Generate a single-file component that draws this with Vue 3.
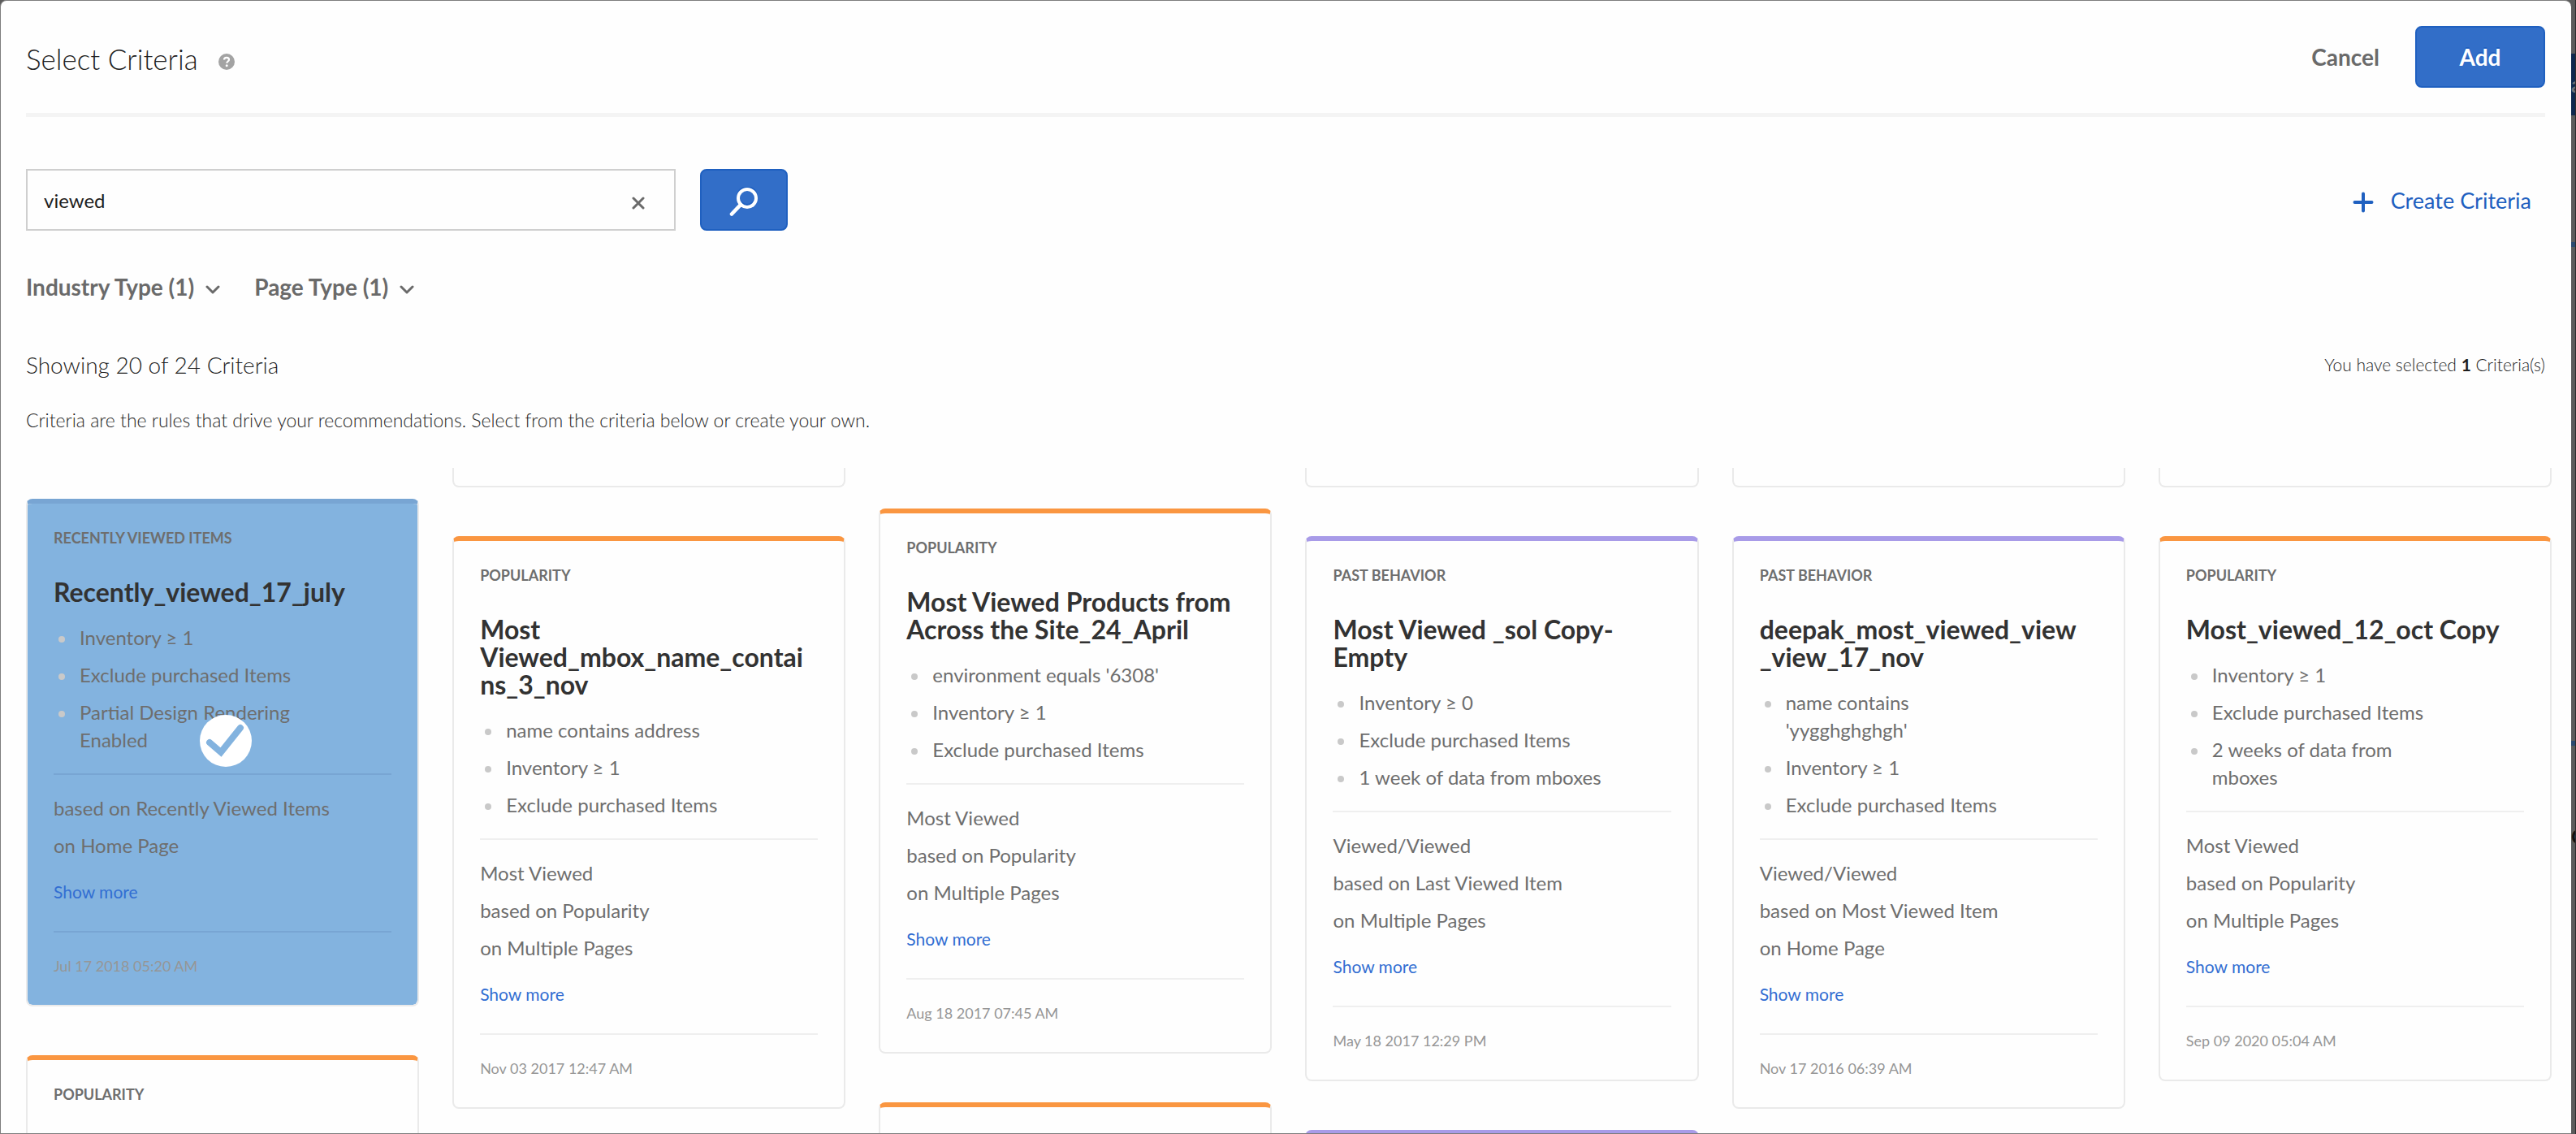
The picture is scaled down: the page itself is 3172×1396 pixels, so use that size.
<script setup>
import { ref } from 'vue'

const query = ref('viewed')

const columns = [
  {
    start: 'start-near',
    cards: [
      {
        category: 'Recently viewed items', tone: 'blue', selected: true,
        title: 'Recently_viewed_17_july',
        rules: ['Inventory ≥ 1', 'Exclude purchased Items', 'Partial Design Rendering Enabled'],
        basis: ['based on Recently Viewed Items', 'on Home Page'],
        date: 'Jul 17 2018 05:20 AM'
      },
      { category: 'Popularity', tone: 'orange' }
    ]
  },
  {
    start: 'stub',
    cards: [
      {
        category: 'Popularity', tone: 'orange',
        title: 'Most Viewed_mbox_name_contains_3_nov',
        rules: ['name contains address', 'Inventory ≥ 1', 'Exclude purchased Items'],
        basis: ['Most Viewed', 'based on Popularity', 'on Multiple Pages'],
        date: 'Nov 03 2017 12:47 AM'
      }
    ]
  },
  {
    start: 'start-far',
    cards: [
      {
        category: 'Popularity', tone: 'orange',
        title: 'Most Viewed Products from Across the Site_24_April',
        rules: ["environment equals '6308'", 'Inventory ≥ 1', 'Exclude purchased Items'],
        basis: ['Most Viewed', 'based on Popularity', 'on Multiple Pages'],
        date: 'Aug 18 2017 07:45 AM'
      },
      { category: '', tone: 'orange' }
    ]
  },
  {
    start: 'stub',
    cards: [
      {
        category: 'Past behavior', tone: 'purple',
        title: 'Most Viewed _sol Copy-Empty',
        rules: ['Inventory ≥ 0', 'Exclude purchased Items', '1 week of data from mboxes'],
        basis: ['Viewed/Viewed', 'based on Last Viewed Item', 'on Multiple Pages'],
        date: 'May 18 2017 12:29 PM'
      },
      { category: '', tone: 'purple' }
    ]
  },
  {
    start: 'stub',
    cards: [
      {
        category: 'Past behavior', tone: 'purple',
        title: 'deepak_most_viewed_view_view_17_nov',
        rules: ["name contains 'yygghghghgh'", 'Inventory ≥ 1', 'Exclude purchased Items'],
        basis: ['Viewed/Viewed', 'based on Most Viewed Item', 'on Home Page'],
        date: 'Nov 17 2016 06:39 AM'
      }
    ]
  },
  {
    start: 'stub',
    cards: [
      {
        category: 'Popularity', tone: 'orange',
        title: 'Most_viewed_12_oct Copy',
        rules: ['Inventory ≥ 1', 'Exclude purchased Items', '2 weeks of data from mboxes'],
        basis: ['Most Viewed', 'based on Popularity', 'on Multiple Pages'],
        date: 'Sep 09 2020 05:04 AM'
      }
    ]
  }
]
</script>

<template>
  <div class="screen">
    <main class="modal">
      <header class="head">
        <div class="heading">
          <h1>Select Criteria</h1>
          <button class="plain help" type="button" aria-label="Help">
            <svg width="20" height="20" viewBox="0 0 20 20">
              <circle cx="10" cy="10" r="10" fill="#a3a3a3" />
              <path d="M7 7.6C7 5.8 8.2 4.8 10 4.8s3 1 3 2.6c0 2-2.7 2.2-2.7 4.4" fill="none" stroke="#fff" stroke-width="2.2" />
              <circle cx="10.2" cy="14.8" r="1.5" fill="#fff" />
            </svg>
          </button>
        </div>
        <div class="actions">
          <button class="plain cancel" type="button">Cancel</button>
          <button class="primary add" type="button">Add</button>
        </div>
      </header>

      <div class="tools">
        <form class="search" role="search" @submit.prevent>
          <div class="field">
            <input v-model="query" type="text" aria-label="Search criteria">
            <button class="plain clear" type="button" aria-label="Clear search" @click="query = ''">
              <svg width="16" height="16" viewBox="0 0 16 16" fill="none" stroke="#6a6a6a" stroke-width="3" stroke-linecap="round">
                <path d="M2 2l12 12M14 2L2 14" />
              </svg>
            </button>
          </div>
          <button class="primary go" type="submit" aria-label="Search">
            <svg width="36" height="38" viewBox="0 0 36 38" fill="none" stroke-width="4" stroke-linecap="round">
              <circle cx="22" cy="12" r="11" stroke="#1f60c0" />
              <circle cx="22" cy="14" r="11" stroke="#fff" />
              <path d="M14 22L3 33.500" stroke="#fff" stroke-width="4.600" />
            </svg>
          </button>
        </form>
        <a class="create" href="#">
          <svg width="26" height="26" viewBox="0 0 26 26" stroke="#1f60c0" stroke-width="4" stroke-linecap="round">
            <path d="M13 2.500v21M2.500 13h21" />
          </svg>
          <span>Create Criteria</span>
        </a>
      </div>

      <div class="filters">
        <button v-for="name in ['Industry Type (1)', 'Page Type (1)']" :key="name" class="plain filter" type="button">
          {{ name }}
          <svg width="18" height="12" viewBox="0 0 18 12" fill="none" stroke="#6a6a6a" stroke-width="3" stroke-linecap="round" stroke-linejoin="round">
            <path d="M2 2l7 7 7-7" />
          </svg>
        </button>
      </div>

      <div class="summary">
        <h2>Showing 20 of 24 Criteria</h2>
        <p>You have selected <strong>1</strong> Criteria(s)</p>
      </div>
      <p class="intro">Criteria are the rules that drive your recommendations. Select from the criteria below or create your own.</p>

      <section class="board" aria-label="Criteria">
        <div v-for="(column, i) in columns" :key="i" class="column" :class="column.start">
          <div v-if="column.start === 'stub'" class="tail"></div>
          <article
            v-for="(card, j) in column.cards"
            :key="j"
            class="card"
            :class="[card.tone, { selected: card.selected, partial: !card.title }]"
          >
            <p class="category">{{ card.category }}</p>
            <template v-if="card.title">
              <h3>{{ card.title }}</h3>
              <ul>
                <li v-for="rule in card.rules" :key="rule">{{ rule }}</li>
              </ul>
              <div class="basis">
                <p v-for="line in card.basis" :key="line">{{ line }}</p>
                <a href="#">Show more</a>
              </div>
              <time>{{ card.date }}</time>
            </template>
            <svg v-if="card.selected" class="badge" width="64" height="64" viewBox="0 0 64 64">
              <circle cx="32" cy="32" r="32" fill="#fff" />
              <path d="M12 34l14 12 24-30" fill="none" stroke="#83b3df" stroke-width="8" stroke-linecap="round" stroke-linejoin="miter" />
            </svg>
          </article>
        </div>
      </section>
    </main>

    <aside class="behind" aria-hidden="true">
      <span class="navy">a</span>
      <span class="bar first"></span>
      <span class="bar second"></span>
      <span class="letter">C</span>
    </aside>
  </div>
</template>

<style>
body {
  margin: 0;
}
</style>

<style scoped>
.screen {
  display: grid;
  grid-template-columns: minmax(0, 1fr) 6px;
  height: 100vh;
  overflow: hidden;
  background: #5b5b5b;
  font-family: Lato, "Liberation Sans", sans-serif;
  color: #1e1e1e;
}

h1, h2, h3, p, ul {
  margin: 0;
  padding: 0;
  font-weight: 400;
}

button, input {
  font: inherit;
  color: inherit;
}

a {
  text-decoration: none;
}

.modal {
  display: flex;
  flex-direction: column;
  box-sizing: border-box;
  min-height: 0;
  padding: 0 32px 0 31px;
  border: solid #7d7d7d;
  border-width: 1px 0 1px 1px;
  border-radius: 8px 8px 0 0;
  background: #fefefe;
}

.plain {
  padding: 0;
  border: 0;
  background: none;
}

.primary {
  box-sizing: border-box;
  height: 76px;
  border: 2px solid #1f60c0;
  border-radius: 8px;
  background: #326ec8;
  color: #fff;
}

.head {
  display: flex;
  align-items: center;
  justify-content: space-between;
  padding: 31px 0;
  border-bottom: 5px solid #f4f4f4;
}

.heading {
  display: flex;
  align-items: center;
  gap: 25px;
  padding-top: 4px;
}

h1 {
  font-size: 35px;
  line-height: 42px;
  font-weight: 300;
}

.help {
  display: flex;
  padding-top: 8px;
}

.actions {
  display: flex;
  align-items: center;
  gap: 44px;
  font-size: 28px;
  font-weight: 700;
}

.cancel {
  color: #6a6a6a;
}

.add {
  width: 160px;
  text-shadow: 0 -2px #1f60c0;
}

.tools {
  display: flex;
  align-items: center;
  justify-content: space-between;
  margin-top: 64px;
}

.search {
  display: flex;
  gap: 30px;
}

.field {
  display: flex;
  align-items: center;
  box-sizing: border-box;
  width: 800px;
  height: 76px;
  border: 2px solid #cfcfcf;
}

.field input {
  flex: 1;
  min-width: 0;
  padding: 0 20px;
  border: 0;
  outline: 0;
  background: none;
  font-size: 24px;
}

.clear {
  display: flex;
  padding: 8px 36px 0 0;
}

.go {
  display: flex;
  align-items: center;
  justify-content: center;
  width: 108px;
  padding: 6px 0 0;
}

.create {
  display: flex;
  align-items: center;
  gap: 21px;
  padding-right: 17px;
  font-size: 27px;
  color: #1f60c0;
}

.create svg {
  padding-top: 6px;
}

.filters {
  display: flex;
  gap: 42px;
  margin-top: 52px;
}

.filter {
  display: flex;
  align-items: center;
  gap: 14px;
  font-size: 28px;
  line-height: 34px;
  font-weight: 700;
  color: #6a6a6a;
}

.filter svg {
  padding-top: 8px;
}

.summary {
  display: flex;
  justify-content: space-between;
  margin-top: 62px;
  line-height: 34px;
}

h2 {
  font-size: 28px;
  font-weight: 300;
}

.summary p {
  font-size: 21px;
  font-weight: 300;
}

.summary strong {
  font-weight: 700;
}

.intro {
  margin-top: 34px;
  font-size: 23px;
  line-height: 34px;
  font-weight: 300;
}

.board {
  flex: 1;
  display: grid;
  grid-template-columns: repeat(6, minmax(0, 1fr));
  gap: 41px;
  min-height: 0;
  margin: 42px -8px 0 0;
  overflow: hidden;
}

.column {
  display: flex;
  flex-direction: column;
  gap: 60px;
}

.start-near {
  padding-top: 38px;
}

.start-far {
  padding-top: 50px;
}

.tail {
  flex: none;
  box-sizing: border-box;
  height: 24px;
  border: 2px solid #eaeaea;
  border-top: 0;
  border-radius: 0 0 8px 8px;
}

.card {
  flex: none;
  position: relative;
  display: flex;
  flex-direction: column;
  padding: 32px 32px 36px;
  border: 2px solid #eaeaea;
  border-top-width: 6px;
  border-radius: 8px;
  color: #6e6e6e;
}

.orange {
  border-top-color: #fa9641;
}

.purple {
  border-top-color: #a89be8;
}

.selected {
  border-top-color: #78a5d3;
  background: #83b3df padding-box;
}

.partial {
  height: 200px;
}

.category {
  font-size: 18px;
  line-height: 20px;
  font-weight: 700;
  text-transform: uppercase;
}

h3 {
  margin-top: 40px;
  padding-right: 14px;
  font-size: 32px;
  line-height: 34px;
  font-weight: 700;
  color: #323232;
  overflow-wrap: anywhere;
}

ul {
  display: flex;
  flex-direction: column;
  gap: 12px;
  max-width: 336px;
  margin: 22px 0 24px;
  font-size: 24px;
  line-height: 34px;
  list-style: none;
}

li {
  display: flex;
  gap: 18px;
}

li::before {
  content: "";
  flex: none;
  width: 8px;
  height: 8px;
  margin: 15px 0 0 6px;
  border-radius: 50%;
  background: #c9c9c9;
}

.basis {
  padding: 18px 0 36px;
  border: solid #efefef;
  border-width: 2px 0;
  font-size: 24px;
  line-height: 46px;
}

.basis a {
  display: block;
  margin-top: 22px;
  font-size: 21px;
  line-height: 24px;
  color: #326ed2;
}

time {
  margin-top: 29px;
  font-size: 18px;
  line-height: 24px;
  color: #969696;
}

.selected .basis {
  border-color: #78a5d3;
}

.badge {
  position: absolute;
  top: 260px;
  left: 212px;
}

.behind {
  display: flex;
  flex-direction: column;
  box-sizing: border-box;
  padding-top: 66px;
  border-right: 1px solid #2b2b2b;
  overflow: hidden;
}

.behind span {
  flex: none;
}

.navy {
  height: 76px;
  background: #10294f;
  color: #6c7076;
  font-size: 26px;
  line-height: 76px;
  font-weight: 700;
}

.bar {
  height: 6px;
  background: #2c4a70;
}

.first {
  margin-top: 156px;
}

.second {
  margin-top: 608px;
}

.letter {
  margin-top: 94px;
  font-size: 25px;
  line-height: 34px;
  font-weight: 700;
  color: #111;
}
</style>
